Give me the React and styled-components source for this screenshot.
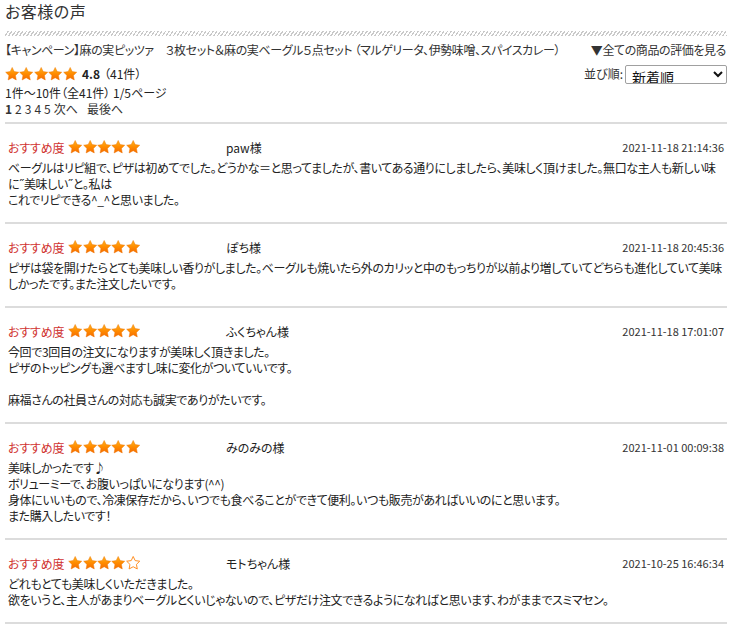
import React, { useId } from "react";
import styled, { createGlobalStyle } from "styled-components";

const Global = createGlobalStyle`
  html, body { margin: 0; padding: 0; background: #fff; }
  body {
    font-family: "Noto Sans CJK JP", "Noto Sans", sans-serif;
    color: #222;
    font-size: 12px;
    font-feature-settings: "palt";
  }
`;

const Page = styled.div`
  width: 722px;
  padding: 0 9px 0 5px;
`;

const Title = styled.h2`
  margin: 0;
  font-size: 16px;
  line-height: 22px;
  font-weight: 400;
  color: #333;
  letter-spacing: 0.5px;
`;

const Stripe = styled.div`
  margin-top: 9px;
  height: 5px;
  background: repeating-linear-gradient(
    -55deg,
    #c9c9c9 0px,
    #c9c9c9 1.2px,
    #ffffff 1.2px,
    #ffffff 3px
  );
`;

const Row = styled.div`
  display: flex;
  align-items: center;
  justify-content: space-between;
  margin-top: ${(p) => p.$mt || 0}px;
  min-height: ${(p) => p.$h || 16}px;
  line-height: 16px;
`;

const Product = styled.span`
  color: #333;
  letter-spacing: -0.4px;
`;

const AllLink = styled.a`
  color: #333;
  text-decoration: none;
  letter-spacing: -0.4px;
  padding-right: 1px;
`;

const Summary = styled.div`
  display: flex;
  align-items: center;
  gap: 4px;
`;

const Score = styled.span`
  font-weight: 700;
  margin-left: 1px;
`;

const SortBox = styled.label`
  display: flex;
  align-items: center;
  gap: 2px;
  color: #333;
`;

const Select = styled.select`
  width: 102px;
  height: 19px;
  font-family: "Noto Sans CJK JP", sans-serif;
  font-size: 14px;
  color: #111;
  border: 1px solid #a0a0a0;
  border-radius: 2px;
  background: #fff;
  padding: 0 2px;
  margin: 0;
`;

const Line = styled.div`
  line-height: 16px;
  margin-top: ${(p) => p.$mt || 0}px;
`;

const Pager = styled.div`
  line-height: 16px;
  display: flex;
  gap: 3px;
  padding-bottom: 5px;
  border-bottom: 2px solid #dcdcdc;
`;

const PageNum = styled.span`
  font-weight: ${(p) => (p.$current ? 700 : 400)};
  color: #333;
  margin-left: ${(p) => p.$ml || 0}px;
`;

const Review = styled.section`
  padding: 14px 3px 14px 3px;
  border-bottom: 2px solid #dcdcdc;
`;

const ReviewHead = styled.div`
  display: grid;
  grid-template-columns: 218px 1fr auto;
  align-items: center;
  height: 18px;
`;

const Recommend = styled.div`
  display: flex;
  align-items: center;
  gap: 4px;
`;

const RecLabel = styled.span`
  color: #d0322f;
  font-size: 12px;
  letter-spacing: -0.2px;
`;

const Name = styled.span`
  color: #222;
`;

const DateText = styled.span`
  color: #333;
  font-size: 11px;
  font-feature-settings: normal;
`;

const Body = styled.p`
  margin: 4px 0 0;
  line-height: 16px;
  white-space: pre-line;
  letter-spacing: -0.4px;
  min-height: 16px;
`;

const StarRow = styled.span`
  display: inline-flex;
`;

function Star({ filled, size }) {
  const id = useId();
  return (
    <svg width={size} height={size} viewBox="0 0 24 24">
      <defs>
        <linearGradient id={id} x1="0" y1="0" x2="0" y2="1">
          <stop offset="0%" stopColor="#ffb41e" />
          <stop offset="50%" stopColor="#ff8c00" />
          <stop offset="100%" stopColor="#f56a00" />
        </linearGradient>
      </defs>
      <path
        d="M12 0.8l3.3 6.9 7.6 1-5.5 5.3 1.4 7.6L12 17.9l-6.8 3.7 1.4-7.6L1.1 8.7l7.6-1z"
        fill={filled ? `url(#${id})` : "#fff"}
        stroke={filled ? "#ee7400" : "#ff8a1a"}
        strokeWidth={filled ? 0.8 : 1.6}
        strokeLinejoin="round"
      />
    </svg>
  );
}

function Stars({ count, size = 14.4 }) {
  return (
    <StarRow>
      {[0, 1, 2, 3, 4].map((i) => (
        <Star key={i} filled={i < count} size={size} />
      ))}
    </StarRow>
  );
}

const reviews = [
  {
    stars: 5,
    name: "paw様",
    date: "2021-11-18 21:14:36",
    text:
      "ベーグルはリピ組で、ピザは初めてでした。どうかな＝と思ってましたが、書いてある通りにしましたら、美味しく頂けました。無口な主人も新しい味に˝美味しい˝と。私は\nこれでリピできる^_^と思いました。",
  },
  {
    stars: 5,
    name: "ぽち様",
    date: "2021-11-18 20:45:36",
    text:
      "ピザは袋を開けたらとても美味しい香りがしました。ベーグルも焼いたら外のカリッと中のもっちりが以前より増していてどちらも進化していて美味しかったです。また注文したいです。",
  },
  {
    stars: 5,
    name: "ふくちゃん様",
    date: "2021-11-18 17:01:07",
    text:
      "今回で3回目の注文になりますが美味しく頂きました。\nピザのトッピングも選べますし味に変化がついていいです。\n\n麻福さんの社員さんの対応も誠実でありがたいです。",
  },
  {
    stars: 5,
    name: "みのみの様",
    date: "2021-11-01 00:09:38",
    text:
      "美味しかったです♪\nボリューミーで、お腹いっぱいになります(^^)\n身体にいいもので、冷凍保存だから、いつでも食べることができて便利。いつも販売があればいいのにと思います。\nまた購入したいです！",
  },
  {
    stars: 4,
    name: "モトちゃん様",
    date: "2021-10-25 16:46:34",
    text:
      "どれもとても美味しくいただきました。\n欲をいうと、主人があまりベーグルとくいじゃないので、ピザだけ注文できるようになればと思います、わがままでスミマセン。",
  },
];

export default function App() {
  return (
    <Page>
      <Global />
      <Title>お客様の声</Title>
      <Stripe />
      <Row $mt={6}>
        <Product>
          【キャンペーン】麻の実ピッツァ　３枚セット＆麻の実ベーグル５点セット （マルゲリータ、伊勢味噌、スパイスカレー）
        </Product>
        <AllLink href="#">▼全ての商品の評価を見る</AllLink>
      </Row>
      <Row $mt={6} $h={20}>
        <Summary>
          <Stars count={5} />
          <Score>4.8</Score>
          <span>（41件）</span>
        </Summary>
        <SortBox>
          並び順:
          <Select defaultValue="new">
            <option value="new">新着順</option>
            <option value="high">評価の高い順</option>
            <option value="low">評価の低い順</option>
          </Select>
        </SortBox>
      </Row>
      <Line $mt={1}>1件～10件（全41件） 1/5ページ</Line>
      <Pager>
        <PageNum $current>1</PageNum>
        <PageNum>2</PageNum>
        <PageNum>3</PageNum>
        <PageNum>4</PageNum>
        <PageNum>5</PageNum>
        <PageNum>次へ</PageNum>
        <PageNum $ml={6}>最後へ</PageNum>
      </Pager>
      {reviews.map((r) => (
        <Review key={r.date}>
          <ReviewHead>
            <Recommend>
              <RecLabel>おすすめ度</RecLabel>
              <Stars count={r.stars} />
            </Recommend>
            <Name>{r.name}</Name>
            <DateText>{r.date}</DateText>
          </ReviewHead>
          <Body>{r.text}</Body>
        </Review>
      ))}
    </Page>
  );
}
